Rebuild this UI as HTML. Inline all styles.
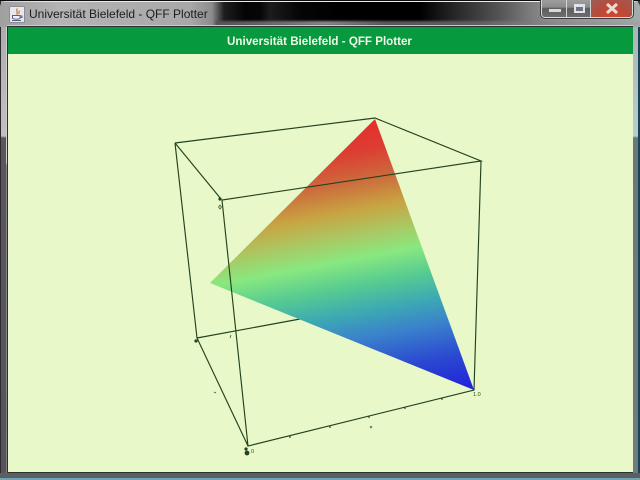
<!DOCTYPE html>
<html>
<head>
<meta charset="utf-8">
<style>
html,body{margin:0;padding:0;background:#000;}
#win{position:relative;width:640px;height:480px;overflow:hidden;background:#000;font-family:"Liberation Sans",sans-serif;}
.abs{position:absolute;}
</style>
</head>
<body>
<div id="win">
  <!-- window frame: left -->
  <div class="abs" style="left:0;top:0;width:8px;height:480px;background:linear-gradient(180deg,#a8a8a8 0,#c4bec4 136px,#5a565c 138px,#56535a 480px);"></div>
  <div class="abs" style="left:0;top:0;width:1px;height:480px;background:#2c2c30;"></div>
  <div class="abs" style="left:6px;top:27px;width:1px;height:446px;background:linear-gradient(180deg,#d0d0d0 0,#d0ccd0 136px,#8a888c 138px,#808084 480px);"></div>
  <!-- window frame: right -->
  <div class="abs" style="left:633px;top:0;width:7px;height:480px;background:linear-gradient(180deg,#a8b0b0 0,#b8ccd4 136px,#68787c 138px,#6c7c80 480px);"></div>
  <div class="abs" style="left:638px;top:0;width:2px;height:480px;background:#1c4450;"></div>
  <!-- titlebar glass -->
  <div class="abs" style="left:0;top:1px;width:640px;height:26px;border-radius:6px 6px 0 0;background:linear-gradient(90deg,#a0a0a0 0,#b4b4b4 60px,#a8a8a8 190px,#8c8c8c 212px,#1e1e1e 224px,#040404 245px,#060606 260px,#1c1c1c 270px,#050505 300px,#000 340px,#000 420px,#222 450px,#555 500px,#7c7c7c 530px,#8f8f8f 550px,#a4acac 640px);"></div>
  <div class="abs" style="left:216px;top:21px;width:424px;height:5px;background:linear-gradient(90deg,#555 0,#6e6e6e 60px,#8a8a8a 110px,#5c5c5c 170px,#606060 260px,#8a8a8a 340px,#a0a4a4 424px);filter:blur(1px);"></div>
  <div class="abs" style="left:0;top:0;width:640px;height:1px;background:#0c0c0c;"></div>
  <div class="abs" style="left:4px;top:1px;width:632px;height:1px;background:linear-gradient(90deg,#d0d0d0,#e8e8e8 40px,#f0f0f0 530px,#d8dcdc);"></div>
  <div class="abs" style="left:7px;top:25px;width:626px;height:1px;background:#c8cccc;"></div>
  <!-- icon -->
  <svg class="abs" style="left:9px;top:6px;" width="16" height="17" viewBox="0 0 16 17">
    <rect x="0.5" y="0.5" width="15" height="16" rx="1" fill="#e8e8ec" stroke="#8c8c94"/>
    <path d="M8.5 2.5C6 5 10 6 7.5 8.5M10.5 4.5C9 6 11 6.5 9.5 8" stroke="#c97a48" stroke-width="1.2" fill="none"/>
    <path d="M3.5 9.5H11V12C11 13.5 4.5 13.5 3.5 12ZM11 10H13V11.5H11" stroke="#566080" stroke-width="1" fill="#f4f4f8"/>
    <path d="M3 14.5H12" stroke="#566080" stroke-width="1"/>
  </svg>
  <div class="abs" style="left:29px;top:7px;width:190px;height:15px;line-height:15px;font-size:12px;color:#1c1c1c;white-space:nowrap;">Universität Bielefeld - QFF Plotter</div>
  <!-- caption buttons -->
  <div class="abs" style="left:541px;top:-1px;width:92px;height:19px;border:1px solid #d8dcdc;border-top:0;border-radius:0 0 4px 4px;box-sizing:border-box;box-shadow:0 0 0 1px #3c3c3c;overflow:hidden;background:#666;">
    <div class="abs" style="left:0;top:0;width:25px;height:18px;background:linear-gradient(180deg,#a0a0a0 0,#8c8c8c 45%,#5e5e5e 52%,#6c6c6c 100%);border-right:1px solid #d0d4d4;box-sizing:border-box;"></div>
    <div class="abs" style="left:25px;top:0;width:24px;height:18px;background:linear-gradient(180deg,#a0a0a0 0,#8c8c8c 45%,#5e5e5e 52%,#6c6c6c 100%);border-right:1px solid #d0d4d4;box-sizing:border-box;"></div>
    <div class="abs" style="left:49px;top:0;width:43px;height:18px;background:radial-gradient(ellipse at 50% 100%,#d8452c 0,#b84a3a 50%,#98605a 100%);"></div>
    <div class="abs" style="left:7px;top:10px;width:12px;height:3px;background:#d8dada;"></div>
    <div class="abs" style="left:32px;top:5px;width:6px;height:4px;border:2px solid #dfe2e6;border-top-width:3px;background:#6c7484;width:7px;height:4px;"></div>
    <svg class="abs" style="left:63px;top:4px;" width="14" height="11" viewBox="0 0 14 11"><path d="M2 1L12 10M12 1L2 10" stroke="#e8dcd4" stroke-width="3" fill="none"/></svg>
  </div>
  <!-- inner border -->
  <div class="abs" style="left:7px;top:26px;width:626px;height:447px;border:1px solid #2c3032;box-sizing:border-box;"></div>
  <!-- green header -->
  <div class="abs" style="left:8px;top:27px;width:625px;height:27px;background:#07993d;color:#f0f8e8;font-size:11.6px;font-weight:bold;text-align:center;line-height:29px;box-sizing:border-box;padding-right:2px;">Universität Bielefeld - QFF Plotter</div>
  <!-- content -->
  <div class="abs" style="left:8px;top:54px;width:625px;height:418px;background:#e8f8c8;"></div>
  <!-- lower frame -->
  <div class="abs" style="left:0;top:473px;width:640px;height:5px;background:#5c5f62;"></div>
  <div class="abs" style="left:0;top:478px;width:640px;height:2px;background:#6fa5b5;"></div>

  <!-- plot -->
  <svg class="abs" style="left:0;top:0;" width="640" height="480" viewBox="0 0 640 480">
    <defs>
      <linearGradient id="g" gradientUnits="userSpaceOnUse" x1="375" y1="119" x2="428" y2="399">
        <stop offset="0" stop-color="#e42e2e"/>
        <stop offset="0.1" stop-color="#dd3d32"/>
        <stop offset="0.2" stop-color="#cc6a3c"/>
        <stop offset="0.3" stop-color="#c8a442"/>
        <stop offset="0.38" stop-color="#adc560"/>
        <stop offset="0.47" stop-color="#88e880"/>
        <stop offset="0.56" stop-color="#58cc90"/>
        <stop offset="0.66" stop-color="#3ca8b4"/>
        <stop offset="0.75" stop-color="#3a80cc"/>
        <stop offset="0.87" stop-color="#2a48d0"/>
        <stop offset="1" stop-color="#2020dc"/>
      </linearGradient>
    </defs>
    <g stroke="#24421f" stroke-width="1.15" fill="none">
      <path d="M197 338L300 319"/>
    </g>
    <polygon points="375,119 210,283 474,390" fill="url(#g)"/>
    <g stroke="#24421f" stroke-width="1.15" fill="none">
      <path d="M175 143L375 118L481 161L222 200L248 446L474 390L481 161"/>
      <path d="M175 143L197 338L248 446"/>
      <path d="M175 143L221 199"/>
      <path d="M290 436l0 2M330 426l0 2M369 416l0 2M405 407l0 2M442 398l0 2"/>
    </g>
    <g fill="#24421f">
      <circle cx="196" cy="341" r="1.6"/>
      <circle cx="220" cy="199" r="1.6"/>
      <circle cx="247" cy="453" r="2.4"/>
      <circle cx="246" cy="449" r="1.6"/>
    </g>
    <g fill="none" stroke="#3a5a36" stroke-width="0.8">
      <path d="M220 205l1.5 2l-1.5 2l-1.5 -2z"/>
      <path d="M231 335l-1 3"/>
      <path d="M214 392l2 1"/>
      <path d="M370 426l1 2l1 -2"/>
    </g>
    <text x="251" y="453" font-family="Liberation Sans,sans-serif" font-size="5.5" fill="#2c4a28">0</text>
    <text x="473" y="396" font-family="Liberation Sans,sans-serif" font-size="5.5" fill="#2c4a28">1.0</text>
  </svg>
</div>
</body>
</html>
